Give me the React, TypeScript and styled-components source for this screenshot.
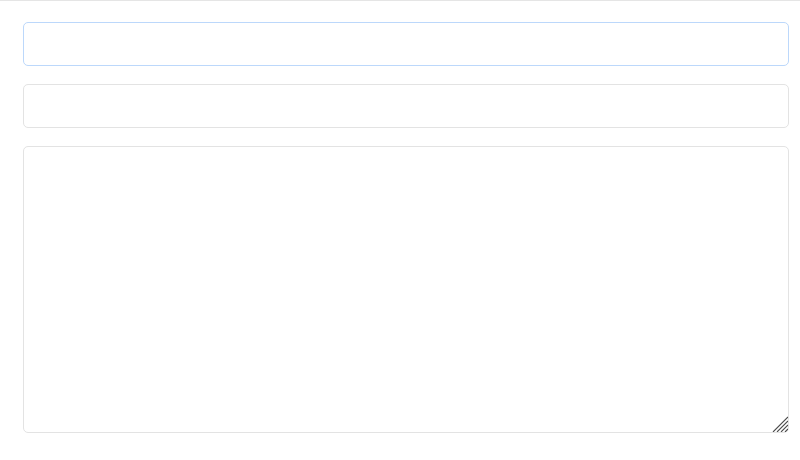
import React from "react"
import styled, { createGlobalStyle } from "styled-components"

const GlobalStyle = createGlobalStyle`
  html, body {
    margin: 0;
    padding: 0;
    background: #ffffff;
    font-family: "Liberation Sans", Arial, sans-serif;
  }
`

const Page = styled.main`
  display: flex;
  flex-direction: column;
  gap: 18px;

  width: 800px;
  height: 460px;
  box-sizing: border-box;
  padding: 21px 11px 0 23px;

  border-top: 1px solid #e5e5e5;
`

const Field = styled.input<{ $active?: boolean }>`
  display: block;
  width: 100%;
  height: 44px;
  box-sizing: border-box;
  margin: 0;
  padding: 0 12px;

  border: 1px solid ${ props => props.$active ? "#bcd8fb" : "#e3e3e3" };
  border-radius: 5px;
  outline: none;
  background: #ffffff;

  font-family: "Liberation Sans", Arial, sans-serif;
  font-size: 14px;
`

const NotesWrap = styled.div`
  position: relative;
  height: 287px;
`

const Notes = styled.textarea`
  display: block;
  width: 100%;
  height: 100%;
  box-sizing: border-box;
  margin: 0;
  padding: 10px 12px;

  border: 1px solid #e3e3e3;
  border-radius: 5px;
  outline: none;
  background: #ffffff;
  resize: none;

  font-family: "Liberation Sans", Arial, sans-serif;
  font-size: 14px;
`

const Grip = styled.svg`
  position: absolute;
  right: 1px;
  bottom: 1px;

  width: 16px;
  height: 16px;

  pointer-events: none;
`

const App: React.FC = () => {
  return (
    <>
      <GlobalStyle />
      <Page>
        <Field $active />
        <Field />
        <NotesWrap>
          <Notes />
          <Grip viewBox="0 0 16 16">
            <g stroke="#4a4a4a" strokeWidth="1.1">
              <line x1="1" y1="16" x2="16" y2="1" />
              <line x1="5" y1="16" x2="16" y2="5" />
              <line x1="9" y1="16" x2="16" y2="9" />
              <line x1="13" y1="16" x2="16" y2="13" />
            </g>
          </Grip>
        </NotesWrap>
      </Page>
    </>
  )
}

export default App
